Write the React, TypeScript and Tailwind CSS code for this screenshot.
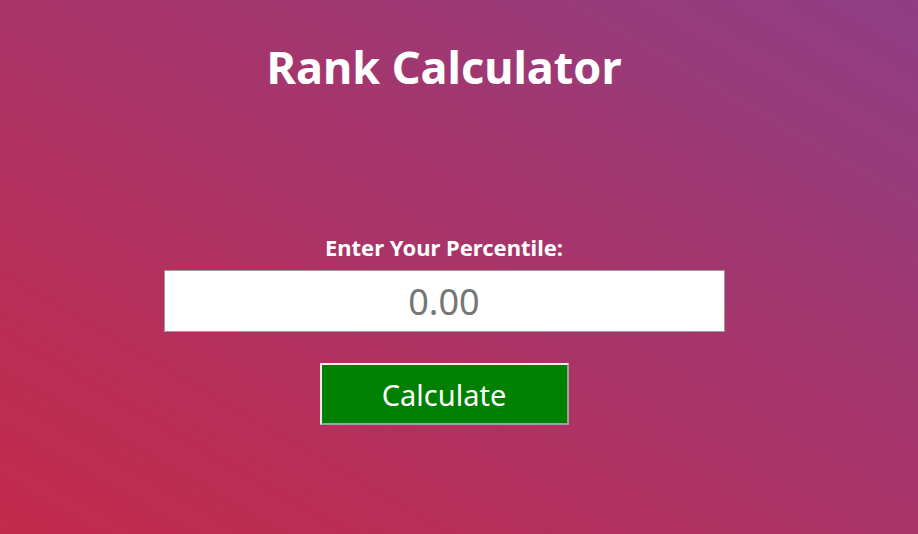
import React from "react";

const App = () => {
  return (
    <div
      className="w-[918px] h-[534px] bg-[linear-gradient(to_top_right,#c42a4b,#8f3e84)] text-white overflow-hidden"
      style={{ fontFamily: '"Noto Sans", "Open Sans", sans-serif' }}
    >
      <div className="w-[888px] flex flex-col items-center">
        <h1 className="mt-[34px] text-[45px] font-bold leading-[66px]">Rank Calculator</h1>
        <label className="mt-[132px] text-[22px] font-bold leading-[30px]">
          Enter Your Percentile:
        </label>
        <input
          type="text"
          placeholder="0.00"
          className="mt-[8px] w-[561px] h-[62px] bg-white border border-[#9a9a9a] text-center text-[36px] text-black placeholder:text-[#767676] outline-none"
        />
        <button className="mt-[31px] w-[249px] h-[62px] bg-[#008000] border-2 border-t-[#eeeeee] border-l-[#eeeeee] border-b-[#a0a0a0] border-r-[#a0a0a0] text-[29px] leading-none">
          Calculate
        </button>
      </div>
    </div>
  );
};

export default App;
